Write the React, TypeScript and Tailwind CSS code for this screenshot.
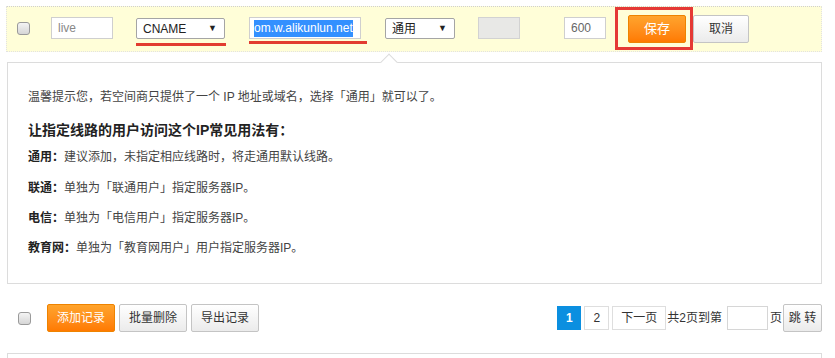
import React from "react";

const FONT = { fontFamily: '"Liberation Sans", Arial, "Noto Sans CJK SC", sans-serif' };

function Check({ className = "" }: { className?: string }) {
  return (
    <div
      className={
        "w-[13px] h-[13px] rounded-[3px] border border-[#9a9a9a] bg-gradient-to-b from-[#f4f4f4] to-[#d6d6d6] " +
        className
      }
    />
  );
}

function Select({ w, label }: { w: string; label: string }) {
  return (
    <div
      className={
        "h-[21px] border border-[#a5a5a5] bg-white rounded-[2px] flex items-center justify-between pl-[6px] pr-[7px] text-[12px] text-[#222] " +
        w
      }
    >
      <span>{label}</span>
      <span className="text-[9px] text-[#222] leading-none">▼</span>
    </div>
  );
}

function GrayBtn({ children, w, h = "h-[28px]" }: { children: React.ReactNode; w: string; h?: string }) {
  return (
    <div
      className={
        "flex items-center justify-center border border-[#c4c4c4] rounded-[2px] bg-gradient-to-b from-[#ffffff] to-[#ebebeb] text-[12px] text-[#333] " +
        w +
        " " +
        h
      }
    >
      {children}
    </div>
  );
}

export default function App() {
  return (
    <div className="w-[835px] h-[358px] overflow-hidden bg-white text-[#333]" style={FONT}>
      {/* edit row */}
      <div className="pt-[6px] pl-[6px]">
        <div className="w-[816px] h-[46px] bg-[#fffed8] border-t border-dotted border-t-[#cfcfcf] border-x border-b border-x-[#e2e2e2] border-b-[#e2e2e2] flex items-start">
          <Check className="ml-[10px] mt-[15px]" />
          <div className="ml-[21px] mt-[10px] w-[62px] h-[22px] border border-[#cfcfcf] bg-white text-[12px] text-[#888] flex items-center pl-[6px]">
            live
          </div>
          <div className="ml-[23px] mt-[11px] flex flex-col w-[90px]">
            <Select w="w-[89px]" label="CNAME" />
            <div className="mt-[4px] h-[3px] w-[90px] bg-[#e23c30]" />
          </div>
          <div className="ml-[23px] mt-[10px] flex flex-col w-[118px]">
            <div className="w-[112px] h-[22px] border border-[#cfcfcf] bg-white flex items-center pl-[4px] overflow-hidden">
              <span className="bg-[#3390ff] text-white text-[12px] leading-[17px] whitespace-nowrap">om.w.alikunlun.net</span>
            </div>
            <div className="mt-[2px] h-[3px] w-[118px] bg-[#e23c30]" />
          </div>
          <div className="ml-[18px] mt-[11px]">
            <Select w="w-[70px]" label="通用" />
          </div>
          <div className="ml-[23px] mt-[10px] w-[42px] h-[22px] border border-[#d2d2d2] bg-[#e8e8e6]" />
          <div className="ml-[44px] mt-[10px] w-[42px] h-[22px] border border-[#cfcfcf] bg-white text-[12px] text-[#666] flex items-center pl-[6px]">
            600
          </div>
          <div className="ml-[9px] mt-0 w-[78px] h-[43px] border-[3px] border-[#e53935] pl-[10px] pt-[5px]">
            <div className="w-[58px] h-[28px] rounded-[2px] border border-[#ee8300] bg-gradient-to-b from-[#ffa42c] to-[#ff7a00] text-white text-[13px] flex items-center justify-center">
              保存
            </div>
          </div>
          <div className="mt-[8px]">
            <GrayBtn w="w-[56px]">取消</GrayBtn>
          </div>
        </div>
      </div>

      {/* tip box */}
      <div className="relative mt-[10px] ml-[7px] w-[815px] h-[222px] border border-[#dcdcdc] bg-white pl-[20px] pt-[26px]">
        <div className="absolute -top-[7px] left-[375px] w-[12px] h-[12px] rotate-45 bg-white border-t border-l border-[#dcdcdc]" />
        <p className="text-[12px] leading-[16px] text-[#444]">
          温馨提示您，若空间商只提供了一个 IP 地址或域名，选择「通用」就可以了。
        </p>
        <p className="mt-[15px] text-[14px] leading-[20px] font-bold text-[#222]">让指定线路的用户访问这个IP常见用法有：</p>
        <p className="mt-[9px] text-[12px] leading-[16px] text-[#444]">
          <b className="text-[#222]">通用：</b>建议添加，未指定相应线路时，将走通用默认线路。
        </p>
        <p className="mt-[15px] text-[12px] leading-[16px] text-[#444]">
          <b className="text-[#222]">联通：</b>单独为「联通用户」指定服务器IP。
        </p>
        <p className="mt-[14px] text-[12px] leading-[16px] text-[#444]">
          <b className="text-[#222]">电信：</b>单独为「电信用户」指定服务器IP。
        </p>
        <p className="mt-[14px] text-[12px] leading-[16px] text-[#444]">
          <b className="text-[#222]">教育网：</b>单独为「教育网用户」用户指定服务器IP。
        </p>
      </div>

      {/* bottom bar */}
      <div className="mt-[20px] h-[28px] flex items-center justify-between pr-[13px]">
        <div className="flex items-center">
          <Check className="ml-[18px]" />
          <div className="ml-[16px] w-[68px] h-[28px] rounded-[2px] border border-[#ee8300] bg-gradient-to-b from-[#ffa42c] to-[#ff7a00] text-white text-[12px] flex items-center justify-center">
            添加记录
          </div>
          <div className="ml-[4px]">
            <GrayBtn w="w-[68px]">批量删除</GrayBtn>
          </div>
          <div className="ml-[4px]">
            <GrayBtn w="w-[68px]">导出记录</GrayBtn>
          </div>
        </div>
        <div className="flex items-center text-[12px] text-[#333]">
          <div className="w-[24px] h-[24px] bg-[#0b8fe0] text-white font-bold flex items-center justify-center">1</div>
          <div className="ml-[3px] w-[25px] h-[24px] border border-[#dedede] bg-white flex items-center justify-center">2</div>
          <div className="ml-[3px] w-[54px] h-[24px] border border-[#dedede] bg-white flex items-center justify-center">下一页</div>
          <span className="ml-[1px]">共2页到第</span>
          <div className="ml-[5px] w-[41px] h-[24px] border border-[#d6d6d6] bg-white" />
          <span className="ml-[2px]">页</span>
          <div className="ml-[1px]">
            <GrayBtn w="w-[39px]" h="h-[28px]">跳 转</GrayBtn>
          </div>
        </div>
      </div>

      {/* next box */}
      <div className="mt-[21px] ml-[7px] w-[815px] h-[20px] border-t border-x border-[#dcdcdc]" />
    </div>
  );
}
